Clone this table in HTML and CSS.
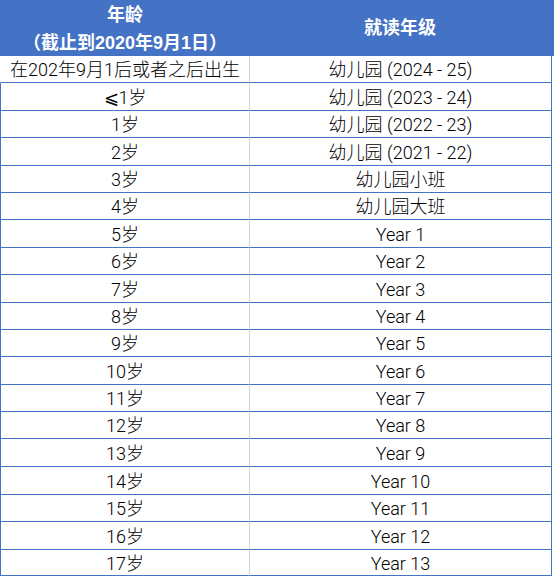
FILE: index.html
```html
<!DOCTYPE html>
<html lang="zh">
<head>
<meta charset="utf-8">
<title>年龄与就读年级</title>
<link rel="stylesheet" href="styles.css">
</head>
<body>
<div class="head">
  <div class="hcell hleft">年龄<br>（截止到2020年9月1日）</div>
  <div class="hcell hright">就读年级</div>
</div>
<div class="sheet">
  <div class="c l first">在202年9月1后或者之后出生</div><div class="c r">幼儿园 (2024 - 25)</div>
  <div class="c l">⩽1岁</div><div class="c r">幼儿园 (2023 - 24)</div>
  <div class="c l">1岁</div><div class="c r">幼儿园 (2022 - 23)</div>
  <div class="c l">2岁</div><div class="c r">幼儿园 (2021 - 22)</div>
  <div class="c l">3岁</div><div class="c r">幼儿园小班</div>
  <div class="c l">4岁</div><div class="c r">幼儿园大班</div>
  <div class="c l">5岁</div><div class="c r">Year 1</div>
  <div class="c l">6岁</div><div class="c r">Year 2</div>
  <div class="c l">7岁</div><div class="c r">Year 3</div>
  <div class="c l">8岁</div><div class="c r">Year 4</div>
  <div class="c l">9岁</div><div class="c r">Year 5</div>
  <div class="c l">10岁</div><div class="c r">Year 6</div>
  <div class="c l">11岁</div><div class="c r">Year 7</div>
  <div class="c l">12岁</div><div class="c r">Year 8</div>
  <div class="c l">13岁</div><div class="c r">Year 9</div>
  <div class="c l">14岁</div><div class="c r">Year 10</div>
  <div class="c l">15岁</div><div class="c r">Year 11</div>
  <div class="c l">16岁</div><div class="c r">Year 12</div>
  <div class="c l">17岁</div><div class="c r">Year 13</div>
</div>
</body>
</html>
```
FILE: styles.css
```css
html, body {
  margin: 0;
  padding: 0;
  background: #ffffff;
}
body {
  width: 554px;
  height: 578px;
  overflow: hidden;
  font-family: "Liberation Sans", "Noto Sans CJK SC", "DejaVu Sans", sans-serif;
  font-size: 18px;
  color: #000000;
}
.head {
  display: flex;
  width: 554px;
  height: 56px;
  background: #4472c4;
  color: #ffffff;
  font-weight: bold;
}
.hcell {
  display: flex;
  align-items: center;
  justify-content: center;
  text-align: center;
  line-height: 28px;
}
.hleft {
  width: 250px;
  padding-top: 1px;
}
.hright {
  width: 300px;
}
.sheet {
  display: grid;
  width: 552px;
  grid-template-columns: 250px 302px;
  grid-template-rows: 27px 28px 27px 28px 27px 27px 28px 27px 28px 27px 27px 28px 27px 27px 28px 28px 27px 28px 26px;
}
.c {
  box-sizing: border-box;
  display: flex;
  align-items: center;
  justify-content: center;
  border-bottom: 1px solid #4472c4;
  white-space: nowrap;
  line-height: 1;
  font-family: Roboto, "Noto Sans CJK SC", sans-serif;
  font-weight: 300;
  padding-top: 2px;
}
.l {
  border-left: 1px solid #4472c4;
  border-right: 1px solid #d4d4d4;
}
.l.first {
  border-left-color: #ffffff;
}
.r {
  border-right: 1px solid #4472c4;
}
```
